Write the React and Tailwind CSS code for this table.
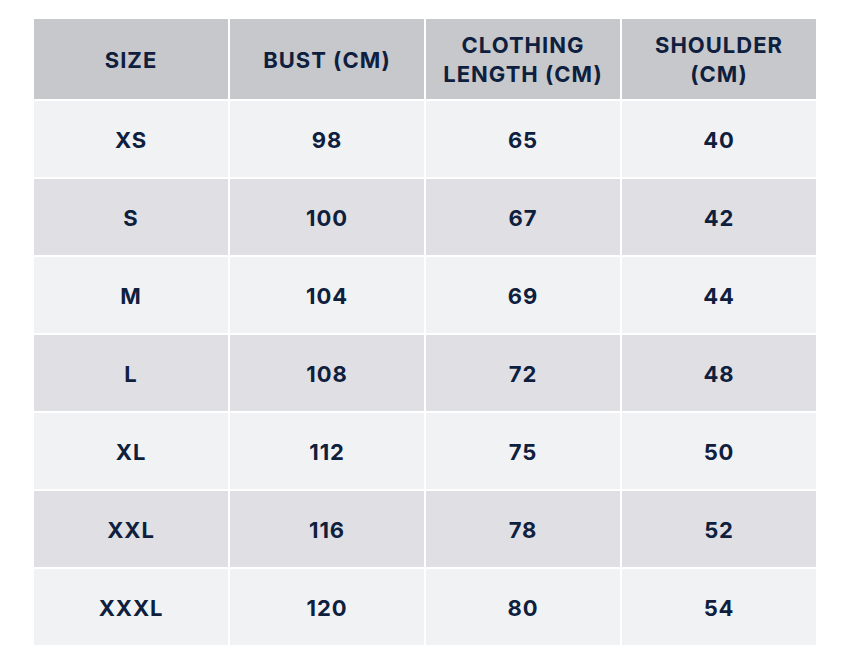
import React from "react";

const rows = [
  ["XS", "98", "65", "40"],
  ["S", "100", "67", "42"],
  ["M", "104", "69", "44"],
  ["L", "108", "72", "48"],
  ["XL", "112", "75", "50"],
  ["XXL", "116", "78", "52"],
  ["XXXL", "120", "80", "54"],
];

const headers = ["SIZE", "BUST (CM)", "CLOTHING\nLENGTH (CM)", "SHOULDER\n(CM)"];

function App() {
  return (
    <div className="min-h-[669px] bg-white pt-[19px] pl-[34px]" style={{ fontFamily: "Inter, 'Liberation Sans', sans-serif" }}>
      <div className="grid w-[782px] grid-cols-4 gap-x-[2px] gap-y-[2px] text-[#0e203d]">
        {headers.map((h, i) => (
          <div
            key={i}
            className="flex h-[80px] items-center justify-center whitespace-pre-line bg-[#c6c8cc] pt-[2px] text-center text-[22px] font-bold leading-[29px] tracking-[0.045em]"
          >
            {h}
          </div>
        ))}
        {rows.map((row, r) =>
          row.map((cell, c) => (
            <div
              key={`${r}-${c}`}
              className={`flex h-[76px] items-center justify-center pt-[3px] text-[22px] font-bold tracking-[0.04em] ${
                r % 2 === 0 ? "bg-[#f1f2f4]" : "bg-[#e0e0e4]"
              }`}
            >
              {cell}
            </div>
          ))
        )}
      </div>
    </div>
  );
}

export default App;
